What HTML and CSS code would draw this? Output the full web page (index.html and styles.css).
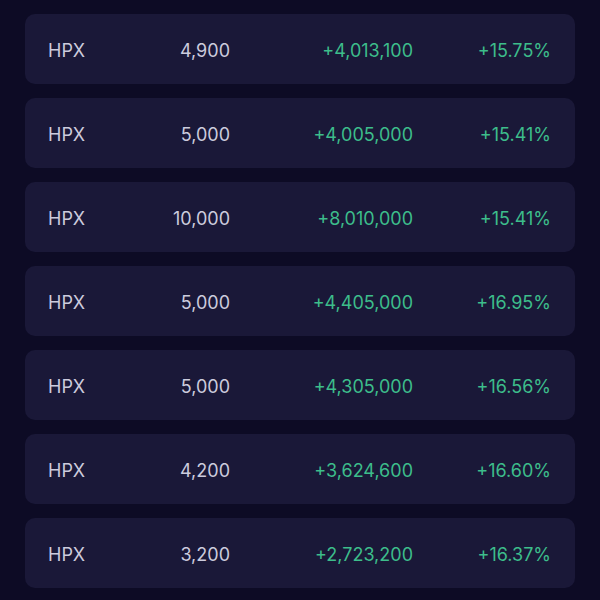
FILE: index.html
```html
<!DOCTYPE html>
<html lang="en">
<head>
<meta charset="utf-8">
<title>Trades</title>
<link rel="stylesheet" href="styles.css">
</head>
<body>
<main class="list">
  <div class="row"><span class="sym">HPX</span><span class="qty">4,900</span><span class="gain">+4,013,100</span><span class="pct">+15.75%</span></div>
  <div class="row"><span class="sym">HPX</span><span class="qty">5,000</span><span class="gain">+4,005,000</span><span class="pct">+15.41%</span></div>
  <div class="row"><span class="sym">HPX</span><span class="qty">10,000</span><span class="gain">+8,010,000</span><span class="pct">+15.41%</span></div>
  <div class="row"><span class="sym">HPX</span><span class="qty">5,000</span><span class="gain">+4,405,000</span><span class="pct">+16.95%</span></div>
  <div class="row"><span class="sym">HPX</span><span class="qty">5,000</span><span class="gain">+4,305,000</span><span class="pct">+16.56%</span></div>
  <div class="row"><span class="sym">HPX</span><span class="qty">4,200</span><span class="gain">+3,624,600</span><span class="pct">+16.60%</span></div>
  <div class="row"><span class="sym">HPX</span><span class="qty">3,200</span><span class="gain">+2,723,200</span><span class="pct">+16.37%</span></div>
</main>
</body>
</html>
```
FILE: styles.css
```css
html, body {
  margin: 0;
  padding: 0;
  background: #0d0b25;
  height: 600px;
  overflow: hidden;
}
.list {
  display: flex;
  flex-direction: column;
  gap: 14px;
  padding: 14px 25px 0 25px;
}
.row {
  display: grid;
  grid-template-columns: 60px 122px 183px 138px;
  align-items: center;
  height: 70px;
  box-sizing: border-box;
  padding: 2px 24px 0 23px;
  background: #1a1838;
  border-radius: 10px;
  font-family: Inter, "Noto Sans", sans-serif;
  font-size: 18px;
  color: #cccbdd;
}
.sym { text-align: left; }
.qty, .gain, .pct { text-align: right; }
.gain, .pct { color: #3dbd8b; }
```
